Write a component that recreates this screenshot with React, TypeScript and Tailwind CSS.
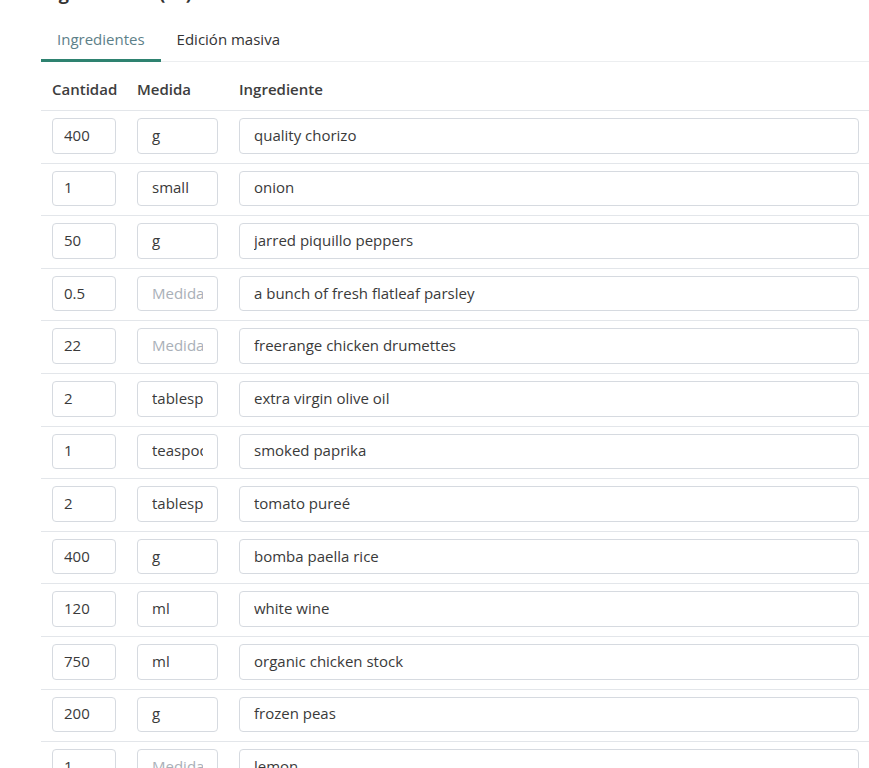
import React from "react";

const rows: { qty: string; unit: string; name: string }[] = [
  { qty: "400", unit: "g", name: "quality chorizo" },
  { qty: "1", unit: "small", name: "onion" },
  { qty: "50", unit: "g", name: "jarred piquillo peppers" },
  { qty: "0.5", unit: "", name: "a bunch of fresh flatleaf parsley" },
  { qty: "22", unit: "", name: "freerange chicken drumettes" },
  { qty: "2", unit: "tablespoons", name: "extra virgin olive oil" },
  { qty: "1", unit: "teaspoon", name: "smoked paprika" },
  { qty: "2", unit: "tablespoons", name: "tomato pureé" },
  { qty: "400", unit: "g", name: "bomba paella rice" },
  { qty: "120", unit: "ml", name: "white wine" },
  { qty: "750", unit: "ml", name: "organic chicken stock" },
  { qty: "200", unit: "g", name: "frozen peas" },
  { qty: "1", unit: "", name: "lemon" },
];

const inputCls =
  "h-[35.6px] rounded-[4px] border border-[#d6dae0] bg-white text-[15px] text-[#3a3a3a] outline-none placeholder:text-[#a9b0b8]";

export default function App() {
  return (
    <div className="h-[768px] overflow-hidden bg-white font-['Open_Sans',sans-serif] text-[#333]">
      <div className="pl-[41px]">
        <h2 className="-mt-[17px] text-[18px] font-bold leading-[20px] text-[#333]">Ingredientes (13)</h2>

        <div className="mt-[18px] flex border-b border-[#eceef0]">
          <button className="-mb-px border-b-[3px] border-[#2e8270] px-[16px] pb-[9px] pt-[7px] text-[15px] leading-[22px] text-[#5d8089]">
            Ingredientes
          </button>
          <button className="-mb-px border-b-[3px] border-transparent px-[16px] pb-[9px] pt-[7px] text-[15px] leading-[22px] text-[#333]">
            Edición masiva
          </button>
        </div>

        <table className="w-[828px] table-fixed border-collapse">
          <thead>
            <tr className="border-b border-[#e3e6ea]">
              <th className="w-[86px] px-[11px] pb-[10px] pt-[17px] text-left text-[15px] leading-[21px] font-semibold text-[#3d3d3d]">Cantidad</th>
              <th className="w-[102px] px-[10px] pb-[10px] pt-[17px] text-left text-[15px] leading-[21px] font-semibold text-[#3d3d3d]">Medida</th>
              <th className="w-[640px] px-[10px] pb-[10px] pt-[17px] text-left text-[15px] leading-[21px] font-semibold text-[#3d3d3d]">Ingrediente</th>
            </tr>
          </thead>
          <tbody>
            {rows.map((r, i) => (
              <tr key={i} className="border-b border-[#e3e6ea]">
                <td className="pb-[9px] pl-[11px] pr-[10px] pt-[7px]">
                  <input className={`${inputCls} w-[64px] px-[11px] pb-[2px]`} defaultValue={r.qty} />
                </td>
                <td className="px-[10px] pb-[9px] pt-[7px]">
                  <input className={`${inputCls} w-[81px] px-[14px] pb-[2px]`} defaultValue={r.unit} placeholder="Medida" />
                </td>
                <td className="pb-[9px] pl-[10px] pr-[10px] pt-[7px]">
                  <input className={`${inputCls} w-[620px] px-[14px] pb-[2px]`} defaultValue={r.name} />
                </td>
              </tr>
            ))}
          </tbody>
        </table>
      </div>
    </div>
  );
}
